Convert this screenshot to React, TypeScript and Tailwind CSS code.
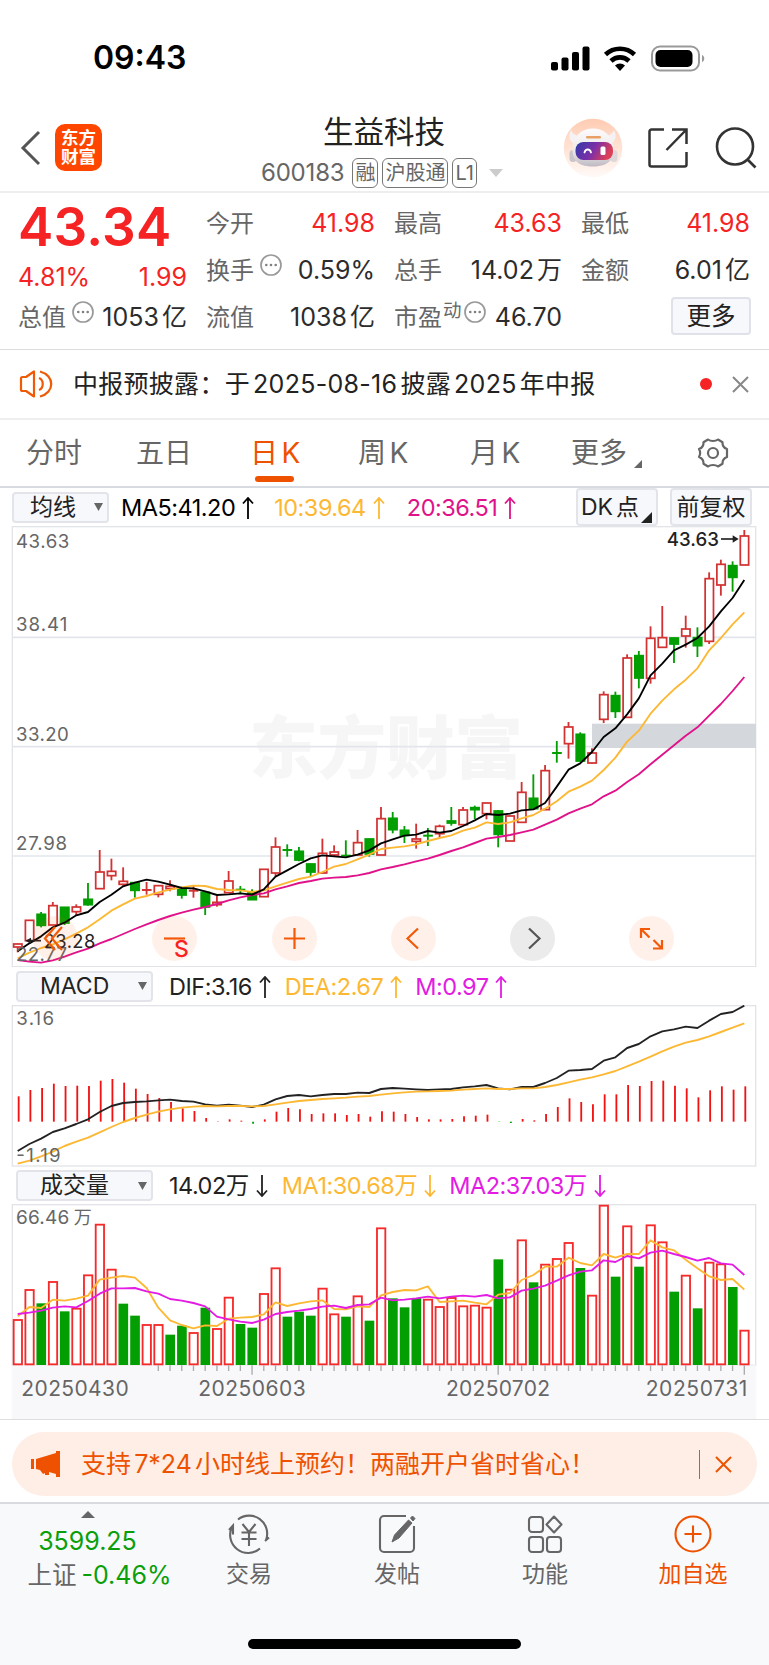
import type { ReactNode } from "react";

// Chart drawings use 3 units per pixel; the first candle sits at x = 53.
const STEP = 35.16;
const cx = (i: number) => 53 + i * STEP;

const UP = "#d23232";
const DOWN = "#029e02";

// [up, high, bodyTop, bodyBottom, low]
type Candle = [number, number, number, number, number];

const candles: Candle[] = [
  [1, 1271, 1271, 1280, 1297], [1, 1200, 1200, 1261, 1261], [0, 1176, 1182, 1215, 1222],
  [1, 1146, 1156, 1214, 1214], [0, 1161, 1161, 1208, 1215], [1, 1153, 1160, 1174, 1185],
  [0, 1089, 1137, 1153, 1157], [1, 990, 1055, 1105, 1105], [1, 1016, 1053, 1066, 1081],
  [1, 1042, 1083, 1092, 1097], [0, 1087, 1087, 1110, 1133], [1, 1086, 1108, 1111, 1124],
  [1, 1096, 1096, 1122, 1132], [1, 1081, 1098, 1105, 1114], [0, 1100, 1104, 1124, 1136],
  [1, 1097, 1110, 1114, 1133], [0, 1116, 1116, 1160, 1185], [1, 1128, 1146, 1153, 1160],
  [1, 1053, 1082, 1117, 1117], [0, 1098, 1107, 1111, 1121], [0, 1108, 1117, 1138, 1138],
  [1, 1047, 1047, 1129, 1129], [1, 952, 980, 1058, 1068], [0, 973, 988, 991, 1010],
  [0, 981, 993, 1019, 1024], [0, 1031, 1031, 1055, 1068], [1, 956, 999, 1058, 1058],
  [1, 976, 995, 1004, 1007], [0, 961, 1005, 1009, 1010], [1, 930, 967, 1004, 1004],
  [0, 956, 956, 1001, 1010], [1, 861, 895, 1004, 1004], [0, 876, 894, 928, 940],
  [0, 918, 930, 945, 969], [1, 911, 956, 963, 986], [0, 924, 945, 949, 978],
  [1, 914, 918, 940, 952], [0, 861, 902, 908, 917], [1, 861, 869, 913, 916],
  [0, 857, 862, 868, 897], [1, 848, 848, 880, 898], [0, 870, 872, 942, 982],
  [1, 887, 887, 962, 962], [1, 786, 816, 906, 906], [0, 763, 834, 865, 869],
  [1, 735, 751, 868, 868], [0, 663, 697, 701, 728], [1, 606, 620, 670, 716],
  [0, 637, 642, 722, 725], [1, 685, 698, 728, 732], [1, 514, 523, 597, 609],
  [0, 515, 526, 573, 594], [1, 403, 413, 591, 593], [0, 393, 406, 473, 505],
  [1, 319, 354, 474, 491], [1, 258, 352, 381, 381], [0, 353, 353, 371, 429],
  [1, 287, 326, 347, 383], [0, 322, 352, 376, 411], [1, 157, 175, 363, 372],
  [1, 119, 132, 194, 227], [0, 124, 136, 171, 215], [1, 30, 47, 134, 134],
];

const ma5 = [
  1294, 1270, 1249, 1222, 1208, 1186, 1176, 1146, 1124, 1099, 1088, 1079, 1085, 1094, 1104, 1105,
  1114, 1125, 1123, 1120, 1124, 1108, 1070, 1051, 1032, 1015, 1006, 1009, 1012, 1004, 991, 970,
  958, 947, 944, 933, 938, 933, 918, 901, 882, 885, 881, 871, 868, 849, 800, 749, 730, 696, 651,
  625, 583, 535, 466, 431, 391, 374, 354, 319, 274, 234, 180,
];
const ma10 = [
  1315, 1298, 1284, 1273, 1258, 1241, 1222, 1198, 1172, 1153, 1136, 1128, 1117, 1109, 1102, 1097,
  1098, 1107, 1110, 1111, 1116, 1111, 1099, 1088, 1077, 1070, 1056, 1040, 1032, 1018, 1004, 987,
  983, 979, 973, 963, 954, 946, 932, 923, 907, 912, 907, 895, 885, 866, 844, 815, 800, 782, 750,
  713, 665, 632, 581, 542, 508, 479, 445, 391, 354, 313, 277,
];
const ma20 = [
  1320, 1325, 1328, 1321, 1310, 1297, 1286, 1270, 1257, 1242, 1227, 1213, 1200, 1188, 1178, 1169,
  1161, 1152, 1141, 1132, 1125, 1120, 1108, 1099, 1089, 1083, 1076, 1073, 1071, 1066, 1059, 1048,
  1041, 1033, 1024, 1016, 1005, 993, 982, 969, 956, 951, 945, 937, 929, 914, 899, 880, 866, 853,
  829, 812, 786, 763, 733, 704, 676, 647, 622, 587, 552, 513, 471,
];

const macdBars = [
  319, 300, 294, 281, 288, 287, 288, 272, 267, 278, 296, 312, 324, 336, 355, 363, 384, 394, 388,
  392, 401, 388, 365, 354, 358, 372, 370, 370, 375, 372, 380, 364, 365, 372, 381, 388, 388, 387,
  379, 377, 374, 396, 399, 387, 391, 372, 351, 325, 336, 343, 313, 313, 285, 288, 273, 272, 287,
  295, 322, 301, 289, 299, 289,
];
const dif = [
  483, 462, 446, 426, 415, 402, 388, 366, 348, 339, 336, 334, 331, 329, 333, 335, 343, 347, 344,
  347, 351, 344, 328, 318, 315, 319, 315, 312, 312, 308, 309, 297, 294, 296, 298, 300, 298, 297,
  292, 289, 285, 295, 298, 291, 291, 279, 264, 242, 240, 237, 212, 202, 174, 162, 139, 124, 118,
  110, 114, 92, 72, 66, 47,
];
const dea = [
  521, 512, 499, 485, 468, 455, 443, 427, 411, 396, 384, 374, 365, 358, 353, 350, 348, 349, 348,
  348, 349, 348, 343, 338, 333, 330, 327, 325, 323, 320, 318, 314, 310, 307, 305, 304, 303, 302,
  299, 297, 295, 297, 297, 295, 295, 291, 285, 277, 269, 262, 253, 243, 229, 215, 200, 184, 170,
  158, 150, 139, 126, 113, 100,
];

// Negative entries are falling days.
const volume = [
  420, 330, -372, 306, -396, 386, 286, 134, 269, -373, -409, 435, 435, -466, -439, 459, -385, 447,
  353, -434, -445, 342, 265, -412, -397, -409, 326, 403, -412, 349, -424, 145, -357, -384, -356,
  359, 381, 354, 379, 377, 383, -240, 329, 181, -309, 254, 237, 189, -266, 347, 77, -292, 139,
  -262, 136, 187, -337, 287, -387, 248, 253, -323, 452,
];
const volMa1 = [
  409, 381, 384, 359, 362, 356, 347, 299, 293, 288, 293, 324, 383, 421, 435, 445, 436, 438, 416,
  413, 411, 403, 367, 378, 370, 364, 361, 387, 388, 379, 381, 346, 336, 330, 331, 319, 366, 364,
  362, 368, 373, 344, 339, 300, 285, 260, 260, 233, 249, 256, 222, 233, 222, 222, 181, 202, 211,
  239, 265, 289, 300, 297, 329,
];
const volMa2 = [
  402, 398, 392, 383, 379, 382, 363, 341, 325, 325, 324, 334, 341, 357, 362, 369, 379, 410, 418,
  425, 429, 419, 402, 396, 392, 387, 380, 377, 384, 375, 373, 353, 361, 359, 355, 350, 355, 350,
  347, 350, 345, 355, 352, 332, 326, 317, 302, 286, 275, 271, 241, 246, 228, 235, 218, 212, 222,
  231, 242, 234, 250, 254, 285,
];

function Line({ data, color, width = 5.6 }: { data: number[]; color: string; width?: number }) {
  return (
    <polyline
      points={data.map((y, i) => `${cx(i)},${y}`).join(" ")}
      fill="none"
      stroke={color}
      strokeWidth={width}
      strokeLinejoin="round"
    />
  );
}

function AxisText({
  x,
  y,
  w,
  children,
  size = 56,
  color = "#666666",
  weight = 400,
}: {
  x: number;
  y: number;
  w: number;
  children: string;
  size?: number;
  color?: string;
  weight?: number;
}) {
  return (
    <text x={x} y={y} textLength={w} fontSize={size} fill={color} fontWeight={weight}>
      {children}
    </text>
  );
}

function Dots() {
  return (
    <svg className="h-[22px] w-[22px] shrink-0" viewBox="0 0 22 22" fill="none">
      <circle cx="11" cy="11" r="10" stroke="#999" strokeWidth="1.700" />
      <g fill="#808080">
        <circle cx="6.300" cy="11" r="1.300" />
        <circle cx="11" cy="11" r="1.300" />
        <circle cx="15.700" cy="11" r="1.300" />
      </g>
    </svg>
  );
}

function Robot() {
  return (
    <svg className="h-[60px] w-[60px]" viewBox="0 0 60 60">
      <defs>
        <linearGradient id="halo" x1="0" y1="0" x2="0" y2="1">
          <stop offset="0" stopColor="#ffcbb2" />
          <stop offset="1" stopColor="#fffaf7" />
        </linearGradient>
        <linearGradient id="face" x1="0" y1="0" x2="1" y2="0.300">
          <stop offset="0" stopColor="#2f3aa8" />
          <stop offset="0.550" stopColor="#7b2fa8" />
          <stop offset="1" stopColor="#dc3f58" />
        </linearGradient>
        <linearGradient id="shell" x1="0" y1="0" x2="0" y2="1">
          <stop offset="0" stopColor="#fdfbfb" />
          <stop offset="0.600" stopColor="#ece8ea" />
          <stop offset="1" stopColor="#bfbac2" />
        </linearGradient>
      </defs>
      <circle cx="30" cy="30" r="29.300" fill="url(#halo)" />
      <path d="M8 12c-3 6-2 11 4 14l6-8c-5 0-8-2-10-6zM51 12c3 6 2 11-4 14l-6-8c5 0 8-2 10-6z" fill="#f6f1f2" />
      <rect x="6.500" y="32" width="7" height="12" rx="3.500" fill="#c9c5cb" />
      <rect x="47.500" y="32" width="7" height="12" rx="3.500" fill="#dcd7da" />
      <path d="M30 10.500c11 0 18 7 20 16 3 13-3 22-20 22S8 40 10 27c2-10 9-16.500 20-16.500z" fill="url(#shell)" />
      <rect x="23" y="18" width="15" height="2.600" rx="1.300" fill="#e8a066" />
      <rect x="12.500" y="24" width="37.500" height="18" rx="8" fill="url(#face)" />
      <path d="M21.500 34.500c1-4 5.500-4 6.500 0" fill="none" stroke="#fff" strokeWidth="1.800" strokeLinecap="round" />
      <rect x="37.500" y="28.500" width="5" height="8.500" rx="1.500" fill="#fff" />
    </svg>
  );
}

function StatusBar() {
  return (
    <div className="flex h-[110px] items-center justify-between pl-[93px] pr-[62px] pt-[6px]">
      <span className="text-[32px] font-semibold leading-none text-black">09:43</span>
      <svg className="h-[40px] w-[156px]" viewBox="0 0 156 40">
        <rect x="0" y="24" width="7" height="8.500" rx="2" />
        <rect x="10.500" y="19.500" width="7" height="13" rx="2" />
        <rect x="21" y="14" width="7" height="18.500" rx="2" />
        <rect x="31.500" y="8.500" width="7" height="24" rx="2" />
        <g fill="none" stroke="#000" strokeWidth="4.600">
          <path d="M54.500 16.500a21 21 0 0 1 29 0" />
          <path d="M60 23a13 13 0 0 1 18 0" />
        </g>
        <path d="M69 33l-5-5.500a7.500 7.500 0 0 1 10 0z" />
        <rect x="101" y="8.500" width="47" height="24" rx="8" fill="none" stroke="#999" strokeWidth="2" />
        <rect x="104.500" y="12" width="37" height="17" rx="5" />
        <path d="M151 17c3 1 3 6 0 7z" fill="#999" />
      </svg>
    </div>
  );
}

function Tag({ children }: { children: string }) {
  return (
    <span className="flex h-[30px] items-center rounded-[6px] border-[1.500px] border-[#777] px-[2px] text-[20px] leading-none text-[#666]">
      {children}
    </span>
  );
}

function Header() {
  return (
    <header className="relative flex h-[83px] items-center justify-between border-b-2 border-[#eeeeee] pb-[6px] pl-[19px] pr-[12px]">
      <div className="flex items-center gap-[14px]">
        <svg className="h-[36px] w-[22px]" viewBox="0 0 22 36" fill="none">
          <path d="M20 2L4 18l16 16" stroke="#555" strokeWidth="3" />
        </svg>
        <div className="flex h-[47px] w-[47px] flex-col items-center justify-center rounded-[10px] bg-[#ff4600] text-[17.500px] font-bold leading-[18.500px] text-white">
          <span>东方</span>
          <span>财富</span>
        </div>
      </div>
      <div className="absolute left-[261px] top-[4px] w-[246px]">
        <div className="text-center text-[30.500px] leading-[36px] text-[#222]">生益科技</div>
        <div className="mt-[8px] flex h-[30px] items-center gap-[4px]">
          <span className="mr-[4px] text-[24px] leading-none tracking-[-0.2px] text-[#666]">600183</span>
          <Tag>融</Tag>
          <Tag>沪股通</Tag>
          <Tag>L1</Tag>
          <svg className="ml-[8px] h-[8px] w-[14px]" viewBox="0 0 14 8">
            <path d="M0 0h14L7 8z" fill="#ccc" />
          </svg>
        </div>
      </div>
      <div className="flex items-center">
        <Robot />
        <svg className="ml-[24px] h-[42px] w-[42px]" viewBox="0 0 42 42" fill="none" stroke="#333" strokeWidth="2.500">
          <path d="M17 2.500H4.500a2 2 0 0 0-2 2v33a2 2 0 0 0 2 2h33a2 2 0 0 0 2-2V25" />
          <path d="M25 2.500h14.500V17M39 3L19.500 23" />
        </svg>
        <svg className="ml-[26px] h-[42px] w-[42px]" viewBox="0 0 42 42" fill="none" stroke="#333" strokeWidth="2.600">
          <circle cx="20" cy="19.500" r="18" />
          <path d="M32 32l8.500 8.500" />
        </svg>
      </div>
    </header>
  );
}

function Stat({ label, value, red, mark }: { label: string; value: string; red?: boolean; mark?: ReactNode }) {
  return (
    <div className="flex h-[47px] items-center justify-between">
      <span className="flex text-[24px] leading-none text-[#666]">
        {label}
        {mark}
      </span>
      <span className={`text-[25px] leading-none ${red ? "text-[#f52323]" : "text-[#2c2c2c]"}`}>{value}</span>
    </div>
  );
}

function Quote() {
  return (
    <section className="grid h-[157px] grid-cols-[169px_169px_168px_169px] gap-x-[19px] border-b border-[#dddde0] pl-[18px] pt-[7px]">
      <div>
        <div className="h-[56px] pt-[2px] text-[53px] font-semibold leading-[50px] tracking-[0.2px] text-[#f52323]">43.34</div>
        <div className="flex h-[38px] items-center justify-between pt-[4px] text-[25px] leading-none text-[#f52323]">
          <span>4.81%</span>
          <span>1.99</span>
        </div>
        <Stat label="总值" value="1053亿" mark={<span className="-mt-[5px] ml-[6px]"><Dots /></span>} />
      </div>
      <div>
        <Stat label="今开" value="41.98" red />
        <Stat label="换手" value="0.59%" mark={<span className="-mt-[5px] ml-[6px]"><Dots /></span>} />
        <Stat label="流值" value="1038亿" />
      </div>
      <div>
        <Stat label="最高" value="43.63" red />
        <Stat label="总手" value="14.02万" />
        <Stat
          label="市盈"
          value="46.70"
          mark={
            <>
              <span className="-mt-[5px] ml-[1px] text-[18.500px]">动</span>
              <span className="-mt-[5px] ml-[2px]"><Dots /></span>
            </>
          }
        />
      </div>
      <div>
        <Stat label="最低" value="41.98" red />
        <Stat label="金额" value="6.01亿" />
        <div className="-mr-px ml-auto mt-[3px] flex h-[38px] w-[80px] items-center justify-center rounded-[4px] border-2 border-[#e0e2ea] bg-[#f7f8fb] text-[24.500px] leading-none text-[#222]">
          更多
        </div>
      </div>
    </section>
  );
}

function Notice() {
  return (
    <section className="flex h-[70px] items-center border-b-2 border-[#eeeeee] pl-[19px] pr-[20px]">
      <svg className="h-[28px] w-[34px]" viewBox="0 0 34 28" fill="none" stroke="#ee5a05" strokeWidth="2.200">
        <path d="M2 8.500c0-1 .6-1.500 1.500-1.500H7l8-5.500v25L7 21H3.500C2.600 21 2 20.500 2 19.500z" strokeLinejoin="round" />
        <path d="M20 8c5 2 5 10 0 12M21 1.500c15 4 15 21 0 25" />
      </svg>
      <span className="ml-[20px] text-[25px] leading-none tracking-[0.280px] text-[#222]">
        中报预披露：于2025-08-16披露2025年中报
      </span>
      <span className="ml-auto h-[12px] w-[12px] rounded-full bg-[#f52323]" />
      <svg className="ml-[20px] h-[17px] w-[17px]" viewBox="0 0 17 17" stroke="#888" strokeWidth="2">
        <path d="M1 1l15 15M16 1L1 16" />
      </svg>
    </section>
  );
}

function Tabs() {
  return (
    <nav className="relative flex h-[68px] items-center border-b-2 border-[#d8dae2] text-[28px] leading-none text-[#666]">
      <span className="ml-[26px] w-[110px]">分时</span>
      <span className="w-[114px]">五日</span>
      <span className="w-[108px] text-[#ee5200]">日K</span>
      <span className="w-[112px]">周K</span>
      <span className="w-[101px]">月K</span>
      <span>更多</span>
      <svg className="ml-[7px] mt-[22px] h-[8px] w-[8px]" viewBox="0 0 8 8">
        <path d="M8 0v8H0z" fill="#666" />
      </svg>
      <svg className="ml-[54px] h-[32px] w-[34px]" viewBox="0 0 34 32" fill="none" stroke="#666" strokeWidth="2.200">
        <path
          d="M12 2.500c2.500 2 7.500 2 10 0l4.500 2.700c-.2 3.300 1 5.500 4.500 6.800v8c-3.500 1.300-4.700 3.500-4.500 6.800L22 29.500c-2.500-2-7.500-2-10 0l-4.500-2.700c.2-3.300-1-5.500-4.500-6.800 1.500-2.600 1.500-5.400 0-8 3.500-1.300 4.700-3.500 4.500-6.800z"
          strokeLinejoin="round"
        />
        <circle cx="17" cy="16" r="5" />
      </svg>
      <span className="absolute left-[255px] top-[56px] h-[6px] w-[39px] rounded-full bg-[#ee5200]" />
    </nav>
  );
}

function Picker({ label, className }: { label: string; className: string }) {
  return (
    <div className={`flex h-[31px] items-center justify-between rounded-[4px] border-2 border-[#e2e4ea] bg-[#f7f8fb] text-[23px] leading-none text-[#222] ${className}`}>
      <span>{label}</span>
      <svg className="h-[8px] w-[9px]" viewBox="0 0 9 8">
        <path d="M0 0h9L4.500 8z" fill="#666" />
      </svg>
    </div>
  );
}

function Arrow({ down }: { down?: boolean }) {
  return (
    <svg className={`ml-[7px] h-[22px] w-[12px] shrink-0 ${down ? "rotate-180" : ""}`} viewBox="0 0 12 22" fill="none" stroke="currentColor" strokeWidth="1.800">
      <path d="M6 1v21M1 6.500L6 1l5 5.500" />
    </svg>
  );
}

function Legend({ text, down, className }: { text: string; down?: boolean; className: string }) {
  return (
    <span className={`flex items-center whitespace-nowrap pt-px text-[23.500px] leading-none tracking-[-0.5px] [text-autospace:no-autospace] ${className}`}>
      {text}
      <Arrow down={down} />
    </span>
  );
}

function PriceChart() {
  const left = 37;
  const right = 2267;
  return (
    <div className="relative h-[441px]">
      <svg className="h-[441px] w-[769px]" viewBox="0 18 2307 1323">
        <rect x={left} y="20" width={right - left} height="1320" fill="#fff" stroke="#e2e4e8" strokeWidth="4" />
        <text x="747" y="760" fontSize="206" fontWeight="900" fill="#f6f6f6" textLength="822">
          东方财富
        </text>
        {[352, 680, 1008].map((y) => (
          <line key={y} x1={left} x2={right} y1={y} y2={y} stroke="#e2e6ec" strokeWidth="5" />
        ))}
        <rect x="1776" y="611" width="492" height="73" fill="#d4d7dc" />
        {candles.map(([up, high, top, bottom, low], i) => {
          const x = cx(i);
          const color = up ? UP : DOWN;
          return (
            <g key={i} stroke={color} fill={up ? "#fff" : color}>
              <line x1={x} x2={x} y1={high} y2={low} strokeWidth="5.500" />
              {bottom - top < 5 ? (
                <rect x={x - 14} y={top - 1} width="29" height="6" fill={color} stroke="none" />
              ) : (
                <rect x={x - 12} y={top + 1} width="25" height={bottom - top} strokeWidth="5.200" />
              )}
            </g>
          );
        })}
        <Line data={ma20} color="#e0128a" />
        <Line data={ma10} color="#fdb833" />
        <Line data={ma5} color="#000" />
        <AxisText x={48} y={83} w={160}>43.63</AxisText>
        <AxisText x={48} y={332} w={154}>38.41</AxisText>
        <AxisText x={48} y={662} w={158}>33.20</AxisText>
        <AxisText x={48} y={990} w={153}>27.98</AxisText>
        <AxisText x={48} y={1322} w={153}>22.77</AxisText>
        <AxisText x={131} y={1283} w={155} color="#222" size={55}>23.28</AxisText>
        <path d="M85 1262h38" stroke="#222" strokeWidth="5" />
        <path d="M76 1262l17-9v18z" fill="#222" />
        <AxisText x={2000} y={77} w={157} color="#222" weight={500} size={56}>43.63</AxisText>
        <path d="M2163 57h38" stroke="#222" strokeWidth="5" />
        <path d="M2216 57l-18-11v22z" fill="#222" />
      </svg>
      <div className="absolute left-[33px] top-[389.500px] flex gap-[74.300px]">
        <Round>
          <path d="M22 11L12 22.500 22 34M29 11L19 22.500 29 34" />
        </Round>
        <Round>
          <path d="M12 22.500h21" />
        </Round>
        <Round>
          <path d="M12 22.500h21M22.500 12v21" />
        </Round>
        <Round>
          <path d="M27 12.500l-10.500 10L27 32.500" />
        </Round>
        <Round gray>
          <path d="M19 12.500l10.500 10L19 32.500" />
        </Round>
        <Round>
          <path d="M21 13h-9v9M12.500 13.500l8 8M24 32.500h9v-8.500M32.500 32l-8-8" />
        </Round>
      </div>
      <span className="absolute left-[174px] top-[412px] text-[23px] font-medium leading-none text-[#fb1f1f]">S</span>
    </div>
  );
}

function Round({ gray, children }: { gray?: boolean; children: ReactNode }) {
  return (
    <span className={`h-[45px] w-[45px] rounded-full ${gray ? "bg-[#e9e9e9]/90" : "bg-[#ff5a14]/9"}`}>
      <svg viewBox="0 0 45 45" fill="none" stroke={gray ? "#555" : "#f25a0a"} strokeWidth="2.200">
        {children}
      </svg>
    </span>
  );
}

function MacdChart() {
  return (
    <svg className="h-[162px] w-[769px]" viewBox="0 45 2307 486">
      <rect x="37" y="47" width="2230" height="481" fill="#fff" stroke="#e2e4e8" strokeWidth="4" />
      {macdBars.map((y, i) => (
        <line key={i} x1={cx(i) + 3} x2={cx(i) + 3} y1="395" y2={y} stroke={y > 395 ? DOWN : "#f31212"} strokeWidth="5.500" />
      ))}
      <Line data={dif} color="#222" />
      <Line data={dea} color="#fdb833" />
      <AxisText x={49} y={104} w={113}>3.16</AxisText>
      <AxisText x={49} y={515} w={133}>-1.19</AxisText>
    </svg>
  );
}

function VolumeChart() {
  return (
    <svg className="h-[215px] w-[769px]" viewBox="0 72 2307 645">
      <rect x="37" y="74" width="2230" height="482" fill="#fff" stroke="#e2e4e8" strokeWidth="4" />
      <rect x="35" y="556" width="2234" height="164" fill="#f8f8fb" />
      {volume.map((v, i) => {
        const y = Math.abs(v);
        return v < 0 ? (
          <rect key={i} x={cx(i) - 14} y={y - 2} width="29" height={557 - y} fill={DOWN} />
        ) : (
          <rect key={i} x={cx(i) - 12} y={y} width="25" height={553 - y} fill="#fff" stroke="#f52a2a" strokeWidth="5.500" />
        );
      })}
      {volume.map((_, i) =>
        i > 11 ? (
          <line key={i} x1={cx(i)} x2={cx(i)} y1="556" y2={(i + 1) % 21 === 0 ? 584 : 573} stroke="#aaa" strokeWidth="4" />
        ) : null,
      )}
      <Line data={volMa1} color="#fdb833" />
      <Line data={volMa2} color="#e31be3" />
      <AxisText x={48} y={131} w={160} size={57}>66.46</AxisText>
      <text x="221" y="133" fontSize="54" fill="#666">万</text>
      <AxisText x={64} y={648} w={322} size={63}>20250430</AxisText>
      <AxisText x={595} y={648} w={322} size={63}>20250603</AxisText>
      <AxisText x={1338} y={648} w={312} size={63}>20250702</AxisText>
      <AxisText x={1937} y={648} w={305} size={63}>20250731</AxisText>
    </svg>
  );
}

function Promo() {
  return (
    <section className="h-[85px] border-b-2 border-t border-b-[#d8dae0] border-t-[#dddde2] px-[12px] pt-[12px]">
      <div className="flex h-[64px] items-center rounded-[32px] bg-[#feeee6] pl-[19px] pr-[25px] text-[#ee5200]">
        <svg className="h-[26px] w-[30px]" viewBox="0 0 30 26" fill="#ee5200">
          <path d="M0 8h3v10H0zM5 8L25 2V0h4v26h-4v-3l-7-2v3h-4v-2l-2 1-3-4-4-1z" />
        </svg>
        <span className="ml-[20px] text-[25px] leading-none [font-feature-settings:'calt'_0]">
          支持7*24小时线上预约！两融开户省时省心！
        </span>
        <span className="ml-auto h-[29px] w-[1.500px] bg-[#ee5200]" />
        <svg className="ml-[15px] h-[17px] w-[17px]" viewBox="0 0 17 17" stroke="#ee5200" strokeWidth="2">
          <path d="M1 1l15 15M16 1L1 16" />
        </svg>
      </div>
    </section>
  );
}

function NavItem({ label, active, children }: { label: string; active?: boolean; children: ReactNode }) {
  return (
    <div className={`flex w-[148px] flex-col items-center text-[23px] leading-none ${active ? "text-[#ee5200]" : "text-[#666]"}`}>
      <svg className="mt-[9px] h-[42px] w-[42px]" viewBox="0 0 42 42" fill="none" stroke="currentColor" strokeWidth="2.100">
        {children}
      </svg>
      <span className="mt-[8px]">{label}</span>
    </div>
  );
}

function BottomBar() {
  return (
    <footer className="flex h-[161px] flex-col items-center bg-[#f8f9fb]">
      <div className="flex w-full">
        <div className="flex w-[175px] flex-col items-center text-[25px] leading-none text-[#0a9f0a]">
          <svg className="mt-[7px] h-[7px] w-[14px]" viewBox="0 0 14 7">
            <path d="M7 0l7 7H0z" fill="#666" />
          </svg>
          <span className="mt-[11px]">3599.25</span>
          <span className="mt-[9px] flex items-center gap-[5px] pl-[24px]">
            <span className="text-[24.500px] text-[#666]">上证</span>
            <span>-0.46%</span>
          </span>
        </div>
        <NavItem label="交易">
          <path d="M10 6.500A18 18 0 0 1 38 27M41 24.500l-4 3.500v0M32 35.500A18 18 0 0 1 4 14M1 17l4-4.500v9" />
          <path d="M14.500 11l6.500 8 6.500-8M13.500 19.500h15M13.500 26h15M21 19.500V33" />
        </NavItem>
        <NavItem label="发帖">
          <path d="M30 3H8a4 4 0 0 0-4 4v28a4 4 0 0 0 4 4h26a4 4 0 0 0 4-4V13" />
          <path d="M16 29l2.500-7L32.500 7l3.500 3-13 15zM34.500 5l2-2 2.500 2.500-2 2.500z" fill="currentColor" strokeWidth="1" />
        </NavItem>
        <NavItem label="功能">
          <rect x="5" y="4" width="14" height="15" rx="3" />
          <rect x="5" y="24" width="14" height="15" rx="3" />
          <rect x="23" y="24" width="14" height="15" rx="3" />
          <path d="M30 3.500l7.500 8-7.500 8-7.500-8z" strokeLinejoin="round" />
        </NavItem>
        <NavItem label="加自选" active>
          <circle cx="21" cy="21" r="17.500" />
          <path d="M12.500 21h17M21 12.500v17" />
        </NavItem>
      </div>
      <div className="mt-auto mb-[16px] h-[10px] w-[273px] rounded-full bg-black" />
    </footer>
  );
}

export default function App() {
  return (
    <div className="h-[1665px] w-[769px] overflow-hidden bg-white font-['Inter','Noto_Sans_CJK_SC',sans-serif] [text-autospace:normal]">
      <StatusBar />
      <Header />
      <Quote />
      <Notice />
      <Tabs />
      <div className="flex h-[38px] items-center pl-[12px] pr-[17px]">
        <Picker label="均线" className="w-[97px] pl-[16px] pr-[4px]" />
        <Legend text="MA5:41.20" className="ml-[12px] text-black" />
        <Legend text="10:39.64" className="ml-[20px] text-[#fdb833]" />
        <Legend text="20:36.51" className="ml-[22px] text-[#e0128a]" />
        <div className="relative ml-auto flex h-[38px] w-[82px] items-center rounded-[4px] border-2 border-[#e2e4ea] bg-[#f7f8fb] pl-[3px] text-[23px] leading-none text-[#222]">
          DK点
          <svg className="absolute bottom-[1px] right-[4px] h-[11px] w-[11px]" viewBox="0 0 11 11">
            <path d="M11 0v11H0z" fill="#222" />
          </svg>
        </div>
        <div className="ml-[12px] flex h-[38px] w-[82px] items-center justify-center rounded-[4px] border-2 border-[#e2e4ea] bg-[#f7f8fb] text-[23px] leading-none text-[#222]">
          前复权
        </div>
      </div>
      <PriceChart />
      <div className="flex h-[38px] items-center pl-[16px]">
        <Picker label="MACD" className="w-[137px] pl-[22px] pr-[4px]" />
        <Legend text="DIF:3.16" className="ml-[16px] text-[#222]" />
        <Legend text="DEA:2.67" className="ml-[14px] text-[#fdb833]" />
        <Legend text="M:0.97" className="ml-[13px] text-[#e31be3]" />
      </div>
      <MacdChart />
      <div className="flex h-[37px] items-center pl-[16px]">
        <Picker label="成交量" className="w-[137px] pl-[22px] pr-[4px]" />
        <Legend text="14.02万" down className="ml-[16px] text-[#222]" />
        <Legend text="MA1:30.68万" down className="ml-[14px] text-[#fdb833]" />
        <Legend text="MA2:37.03万" down className="ml-[13px] text-[#e31be3]" />
      </div>
      <VolumeChart />
      <Promo />
      <BottomBar />
    </div>
  );
}
